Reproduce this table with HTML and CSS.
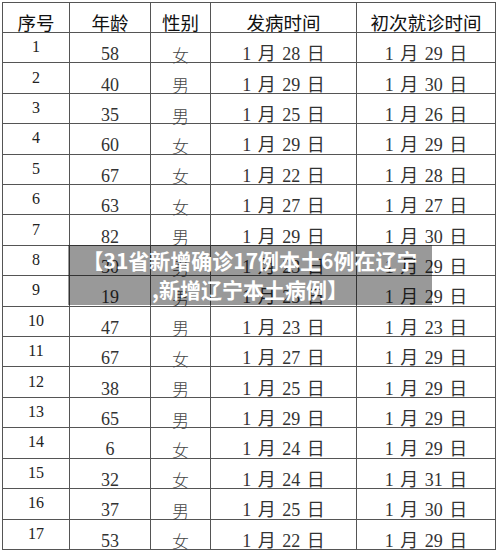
FILE: index.html
```html
<!DOCTYPE html>
<html lang="zh">
<head>
<meta charset="utf-8">
<link rel="stylesheet" href="styles.css">
</head>
<body>
<div class="page">
  <div class="table">
    <div class="cell head">序号</div>
    <div class="cell head">年龄</div>
    <div class="cell head">性别</div>
    <div class="cell head">发病时间</div>
    <div class="cell head">初次就诊时间</div>

    <div class="cell idx">1</div><div class="cell val">58</div><div class="cell val cjk">女</div><div class="cell val date">1 月 28 日</div><div class="cell val date">1 月 29 日</div>
    <div class="cell idx">2</div><div class="cell val">40</div><div class="cell val cjk">男</div><div class="cell val date">1 月 29 日</div><div class="cell val date">1 月 30 日</div>
    <div class="cell idx">3</div><div class="cell val">35</div><div class="cell val cjk">男</div><div class="cell val date">1 月 25 日</div><div class="cell val date">1 月 26 日</div>
    <div class="cell idx">4</div><div class="cell val">60</div><div class="cell val cjk">女</div><div class="cell val date">1 月 29 日</div><div class="cell val date">1 月 29 日</div>
    <div class="cell idx">5</div><div class="cell val">67</div><div class="cell val cjk">女</div><div class="cell val date">1 月 22 日</div><div class="cell val date">1 月 28 日</div>
    <div class="cell idx">6</div><div class="cell val">63</div><div class="cell val cjk">女</div><div class="cell val date">1 月 27 日</div><div class="cell val date">1 月 27 日</div>
    <div class="cell idx">7</div><div class="cell val">82</div><div class="cell val cjk">男</div><div class="cell val date">1 月 29 日</div><div class="cell val date">1 月 30 日</div>
    <div class="cell idx">8</div><div class="cell val">30</div><div class="cell val cjk">男</div><div class="cell val date">1 月 23 日</div><div class="cell val date">1 月 29 日</div>
    <div class="cell idx">9</div><div class="cell val">19</div><div class="cell val cjk">男</div><div class="cell val date">1 月 23 日</div><div class="cell val date">1 月 29 日</div>
    <div class="cell idx">10</div><div class="cell val">47</div><div class="cell val cjk">男</div><div class="cell val date">1 月 23 日</div><div class="cell val date">1 月 23 日</div>
    <div class="cell idx">11</div><div class="cell val">67</div><div class="cell val cjk">女</div><div class="cell val date">1 月 27 日</div><div class="cell val date">1 月 29 日</div>
    <div class="cell idx">12</div><div class="cell val">38</div><div class="cell val cjk">男</div><div class="cell val date">1 月 25 日</div><div class="cell val date">1 月 29 日</div>
    <div class="cell idx">13</div><div class="cell val">65</div><div class="cell val cjk">男</div><div class="cell val date">1 月 29 日</div><div class="cell val date">1 月 29 日</div>
    <div class="cell idx">14</div><div class="cell val">6</div><div class="cell val cjk">女</div><div class="cell val date">1 月 24 日</div><div class="cell val date">1 月 29 日</div>
    <div class="cell idx">15</div><div class="cell val">32</div><div class="cell val cjk">女</div><div class="cell val date">1 月 24 日</div><div class="cell val date">1 月 31 日</div>
    <div class="cell idx">16</div><div class="cell val">37</div><div class="cell val cjk">男</div><div class="cell val date">1 月 25 日</div><div class="cell val date">1 月 30 日</div>
    <div class="cell idx">17</div><div class="cell val">53</div><div class="cell val cjk">女</div><div class="cell val date">1 月 22 日</div><div class="cell val date">1 月 29 日</div>
  </div>
  <div class="banner">【31省新增确诊17例本土6例在辽宁<br>,新增辽宁本土病例】</div>
</div>
</body>
</html>
```

FILE: styles.css
```css
html, body {
  margin: 0;
  padding: 0;
  background: #ffffff;
}

.page {
  position: relative;
  width: 500px;
  height: 552px;
  overflow: hidden;
}

.table {
  position: absolute;
  left: 2px;
  top: 2px;
  display: grid;
  grid-template-columns: 67px 81px 60px 146px 139px;
  grid-template-rows: 30px repeat(17, 30.42px);
  border-left: 1px solid #555;
  border-top: 1px solid #555;
}

.cell {
  box-sizing: border-box;
  border-right: 1px solid #555;
  border-bottom: 1px solid #555;
  display: flex;
  justify-content: center;
  align-items: center;
  line-height: 1;
  color: #222;
  font-family: "Liberation Serif", "Noto Sans CJK SC", serif;
  white-space: nowrap;
}

.head {
  font-family: "Noto Sans CJK SC", "Noto Sans", sans-serif;
  font-size: 18.5px;
  color: #111;
  padding-top: 9px;
}

.idx {
  font-size: 16px;
  padding-bottom: 1px;
}

.val {
  font-size: 18px;
  padding-top: 13px;
  color: #333;
}

.date {
  word-spacing: 2px;
}

.cjk {
  font-family: "Noto Sans CJK SC", sans-serif;
  font-weight: 300;
  font-size: 17px;
  color: #444;
}

.banner {
  position: absolute;
  left: 68px;
  top: 245px;
  width: 364px;
  height: 60px;
  box-sizing: border-box;
  padding-top: 1px;
  background: rgba(0, 0, 0, 0.4);
  color: #ffffff;
  font-family: "Noto Sans CJK SC", "Noto Sans", sans-serif;
  font-weight: 700;
  font-size: 21px;
  line-height: 29px;
  text-align: center;
}
```
